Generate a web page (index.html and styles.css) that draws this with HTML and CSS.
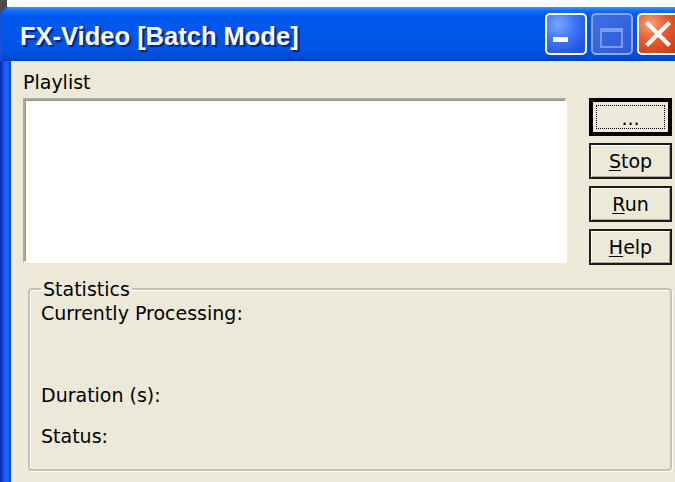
FILE: index.html
```html
<!DOCTYPE html>
<html lang="en">
<head>
<meta charset="utf-8">
<title>FX-Video [Batch Mode]</title>
<link rel="stylesheet" href="styles.css">
</head>
<body>
<div class="window">
  <div class="desktop-edge"></div>
  <div class="titlebar-wrap">
    <header class="titlebar">
      <h1 class="title">FX-Video [Batch Mode]</h1>
      <div class="caption-buttons">
        <button class="cap cap-min" type="button" aria-label="Minimize"><span class="min-glyph"></span></button>
        <button class="cap cap-max" type="button" aria-label="Maximize" disabled><span class="max-glyph"></span></button>
        <button class="cap cap-close" type="button" aria-label="Close">
          <svg class="close-glyph" viewBox="0 0 26 26" width="26" height="26" aria-hidden="true">
            <path d="M3 3 L23 23 M23 3 L3 23" stroke="#fff" stroke-width="4.2" stroke-linecap="square" fill="none"/>
          </svg>
        </button>
      </div>
    </header>
  </div>
  <div class="frame">
    <main class="client">
      <section class="playlist">
        <label class="playlist-label" for="playlist">Playlist</label>
        <div class="listbox" id="playlist" role="listbox" tabindex="0"></div>
        <div class="actions">
          <button class="btn btn-default" type="button"><span class="focus-ring">...</span></button>
          <button class="btn" type="button"><u>S</u>top</button>
          <button class="btn" type="button"><u>R</u>un</button>
          <button class="btn" type="button"><u>H</u>elp</button>
        </div>
      </section>
      <fieldset class="group">
        <legend class="group-title">Statistics</legend>
        <div class="stats">
          <div class="stat stat-processing">Currently Processing:</div>
          <div class="stat">Duration (s):</div>
          <div class="stat">Status:</div>
        </div>
      </fieldset>
    </main>
  </div>
</div>
</body>
</html>
```

FILE: styles.css
```css
* { box-sizing: border-box; }

html, body {
  margin: 0;
  padding: 0;
}

body {
  width: 675px;
  height: 482px;
  overflow: hidden;
  background: #fff;
  font-family: "DejaVu Sans", Verdana, sans-serif;
  font-size: 19px;
  color: #000;
}

.window {
  width: 675px;
  height: 482px;
  display: flex;
  flex-direction: column;
  overflow: hidden;
}

/* strip of desktop above the window */
.desktop-edge {
  flex: none;
  height: 7px;
  background: linear-gradient(to right, #4b4b4b 7px, #fff 7px);
}

.titlebar-wrap {
  flex: none;
  background: linear-gradient(#4b4b4b, #4b4b4b) no-repeat 0 0 / 8px 10px;
}

.titlebar {
  height: 54px;
  display: flex;
  align-items: flex-start;
  padding-left: 20px;
  border-top-left-radius: 9px;
  background: linear-gradient(to bottom,
    #3f93ff 0px, #1a74fb 3px, #0a62f2 6px, #0058ee 11px,
    #0056e8 30px, #0052e3 44px, #004ad8 50px, #003fc4 54px);
  box-shadow: inset 2px 0 0 #1c4fd6;
}

.title {
  margin: 0;
  padding-top: 15px;
  font: bold 25.5px/28px "Liberation Sans", Arial, sans-serif;
  color: #fff;
  white-space: nowrap;
  text-shadow: 2px 2px 1px #0a2283;
}

.caption-buttons {
  margin-left: auto;
  margin-right: -4px;
  margin-top: 6px;
  display: flex;
  gap: 4px;
}

.cap {
  flex: none;
  width: 42px;
  height: 42px;
  padding: 0;
  border: 2px solid #fff;
  border-radius: 5px;
  display: flex;
}

.cap-min {
  align-items: flex-end;
  justify-content: flex-start;
  padding: 0 0 11px 6px;
  background: radial-gradient(circle at 30% 25%, #7aa6ff 0%, #3b73f4 45%, #2257e4 80%, #1c4ed8 100%);
}

.min-glyph {
  width: 15px;
  height: 5px;
  background: #fff;
}

.cap-max {
  align-items: flex-start;
  justify-content: flex-start;
  padding: 13px 0 0 7px;
  border-color: rgba(255, 255, 255, 0.42);
  background: linear-gradient(to bottom right, #3f6fe4, #2c5bd6);
}

.max-glyph {
  width: 23px;
  height: 20px;
  border: 2px solid #7c9bf0;
  border-top-width: 4px;
}

.cap-close {
  align-items: center;
  justify-content: center;
  background: radial-gradient(circle at 30% 25%, #f7a17c 0%, #e85e34 40%, #d4461f 75%, #c23c18 100%);
}

.close-glyph {
  display: block;
}

/* blue window frame on the left */
.frame {
  flex: 1;
  display: flex;
  padding-left: 11px;
  background: linear-gradient(to right,
    #0a2aa8 0px, #0b3bd0 2px, #1a66f4 5px, #1c64f0 8px, #0a46d8 10px, #0a46d8 11px, #ece9d8 11px);
}

.client {
  flex: 1;
  background: #ece9d8;
  padding: 10px 3px 0 12px;
}

.playlist {
  display: grid;
  grid-template-columns: 544px 83px;
  grid-template-rows: auto 165px;
  column-gap: 22px;
  row-gap: 5px;
}

.playlist-label {
  grid-column: 1;
  grid-row: 1;
  line-height: 22px;
}

.listbox {
  grid-column: 1;
  grid-row: 2;
  height: 165px;
  background: #fff;
  border-style: solid;
  border-width: 2px;
  border-color: #aeaa9b #fff #fff #aeaa9b;
  box-shadow: inset 1px 1px 0 #9a978b;
}

.actions {
  grid-column: 2;
  grid-row: 2;
  display: flex;
  flex-direction: column;
  gap: 7px;
}

.btn {
  flex: none;
  width: 83px;
  height: 36px;
  padding: 0;
  border: 2px solid #1b1b1b;
  background: #ece9d8;
  box-shadow: inset 1px 1px 0 #fff, inset -1px -1px 0 #aca899;
  font: 19px/22px "DejaVu Sans", Verdana, sans-serif;
  color: #000;
  text-align: center;
}

.btn u {
  text-decoration-thickness: 1px;
  text-underline-offset: 2px;
}

.btn-default {
  height: 38px;
  border-width: 4px;
  border-color: #000;
  padding: 3px;
  box-shadow: none;
  display: flex;
}

.focus-ring {
  flex: 1;
  border: 1px dotted #000;
  display: flex;
  align-items: flex-end;
  justify-content: center;
  line-height: 20px;
}

/* group box */
.group {
  margin: 15px 0 0 5px;
  width: 644px;
  min-width: 0;
  height: 193px;
  padding: 2px 11px 0;
  border: 2px solid #c6c2b1;
  border-radius: 4px;
  box-shadow: inset 1px 1px 0 #fff, 1px 1px 0 #fff;
}

.group-title {
  padding: 0 2px;
  line-height: 22px;
}

.stats {
  display: flex;
  flex-direction: column;
  gap: 19px;
}

.stat {
  line-height: 22px;
}

.stat-processing {
  min-height: 63px;
}
```
